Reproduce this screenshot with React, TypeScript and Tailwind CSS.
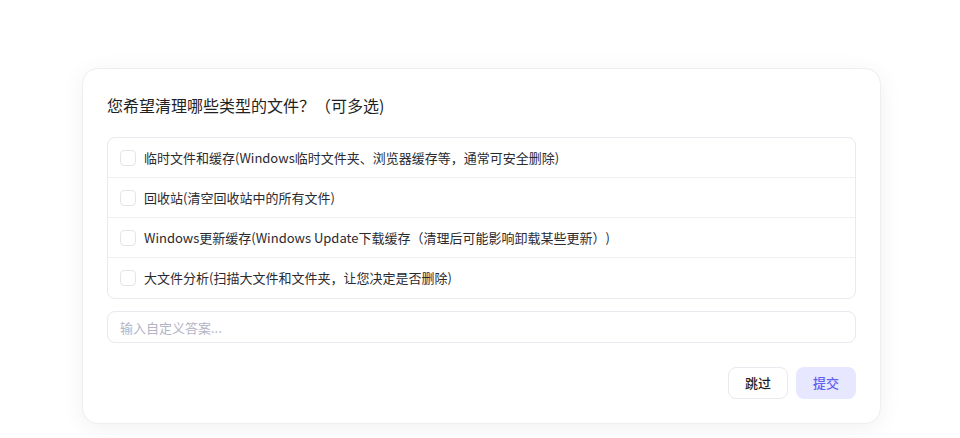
import { useState } from "react";

const options = [
  "临时文件和缓存(Windows临时文件夹、浏览器缓存等，通常可安全删除)",
  "回收站(清空回收站中的所有文件)",
  "Windows更新缓存(Windows Update下载缓存（清理后可能影响卸载某些更新）)",
  "大文件分析(扫描大文件和文件夹，让您决定是否删除)",
];

export default function App() {
  const [checked, setChecked] = useState<boolean[]>(options.map(() => false));
  const [custom, setCustom] = useState("");

  return (
    <div
      className="min-h-screen bg-white pt-[68px] [text-spacing-trim:space-all]"
      style={{ fontFamily: '"Noto Sans CJK SC", "Noto Sans", sans-serif' }}
    >
      <div className="ml-[82px] w-[799px] rounded-2xl border border-[#eeeef2] bg-white p-6 shadow-[0_4px_24px_rgba(20,20,40,0.06)]">
        {/* Question */}
        <h1 className="mb-5 text-base leading-6 font-normal text-[#1f1f24]">
          您希望清理哪些类型的文件？（可多选)
        </h1>

        {/* Options */}
        <div className="overflow-hidden rounded-lg border border-[#e9e9ef]">
          {options.map((opt, i) => (
            <label
              key={opt}
              className="flex h-10 cursor-pointer items-center gap-2 border-b border-[#efeff3] px-3 last:border-b-0"
            >
              <input
                type="checkbox"
                checked={checked[i]}
                onChange={() =>
                  setChecked((c) => c.map((v, j) => (j === i ? !v : v)))
                }
                className="h-4 w-4 shrink-0 appearance-none rounded border border-[#e4e4ea] bg-white checked:border-[#6366f1] checked:bg-[#6366f1]"
              />
              <span className="text-[13px] leading-5 text-[#2a2a30]">{opt}</span>
            </label>
          ))}
        </div>

        {/* Custom answer */}
        <input
          value={custom}
          onChange={(e) => setCustom(e.target.value)}
          placeholder="输入自定义答案..."
          className="mt-3 h-8 w-full rounded-lg border border-[#e9e9ef] px-3 text-[13px] text-[#2a2a30] outline-none placeholder:text-[#b3b3c4]"
        />

        {/* Actions */}
        <div className="mt-6 flex justify-end gap-2">
          <button className="h-8 w-[60px] rounded-lg border border-[#e9e9ef] bg-white text-[13px] font-medium text-[#1f1f24]">
            跳过
          </button>
          <button className="h-8 w-[60px] rounded-lg bg-[#e7e7ff] text-[13px] font-medium text-[#5f5ff0]">
            提交
          </button>
        </div>
      </div>
    </div>
  );
}
